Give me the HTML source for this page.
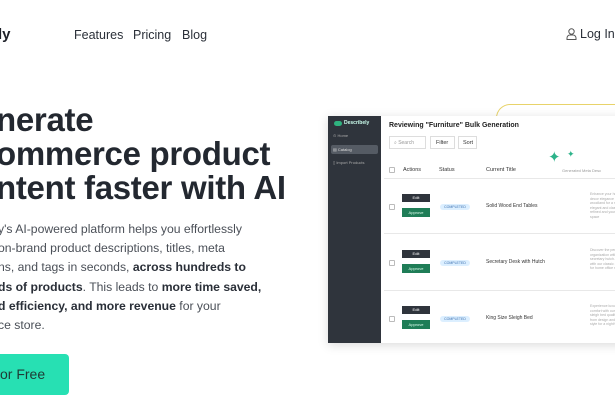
<!DOCTYPE html>
<html><head><style>
*{margin:0;padding:0;box-sizing:border-box}
body{width:615px;height:410px;overflow:hidden;background:#fff;font-family:"Liberation Sans",sans-serif;color:#222;position:relative}
.a{position:absolute;white-space:nowrap}
.nav{font-size:12.5px;color:#2a2f38}
h1{position:absolute;left:-4px;top:103px;font-size:33px;line-height:34px;font-weight:bold;color:#232830;letter-spacing:-0.3px}
.p{position:absolute;left:-2px;top:220px;font-size:12.2px;line-height:19.2px;color:#4a4f57}
.p b{color:#2a2f38}
.btn{position:absolute;left:-10px;top:354px;width:79px;height:41px;background:#27e0b3;border-radius:4px;font-size:14px;color:#1f3a34;padding:12px 0 0 10px}
.shot{position:absolute;left:328px;top:116px;width:300px;height:227px;background:#fff;box-shadow:0 2px 10px rgba(0,0,0,.15)}
.side{position:absolute;left:0;top:0;width:53px;height:227px;background:#2f343c}
.t{font-size:5.5px;color:#333}
.edit{position:absolute;left:74px;width:28px;height:8px;background:#2f343c;color:#fff;font-size:4px;text-align:center;line-height:8px}
.appr{position:absolute;left:74px;width:28px;height:9px;background:#1f7d57;color:#dfe;font-size:4px;text-align:center;line-height:9px}
.badge{position:absolute;left:112px;width:30px;height:6px;background:#dcefff;color:#3a6fb0;font-size:3.5px;text-align:center;line-height:6px;border-radius:3px}
.cb{position:absolute;left:61px;width:6px;height:6px;border:1px solid #bbb;border-radius:1px}
.line{position:absolute;left:56px;right:0;height:1px;background:#e8e8e8}
.desc{position:absolute;left:262px;width:40px;font-size:3.5px;line-height:4.5px;color:#aaa;white-space:normal}
</style></head><body>
<div class="a" style="left:-2px;top:26px;font-size:15px;font-weight:bold;color:#1d2028">ly</div>
<div class="a nav" style="left:74px;top:28px">Features</div>
<div class="a nav" style="left:133px;top:28px">Pricing</div>
<div class="a nav" style="left:182px;top:28px">Blog</div>
<svg class="a" style="left:566px;top:28px" width="11" height="12" viewBox="0 0 11 12"><circle cx="5.5" cy="3.5" r="2.7" fill="none" stroke="#555" stroke-width="1"/><path d="M1 11.5V10a3 3 0 0 1 3-3h3a3 3 0 0 1 3 3v1.5z" fill="none" stroke="#555" stroke-width="1"/></svg>
<div class="a nav" style="left:580px;top:27px;font-size:12.5px">Log In</div>
<h1>nerate<br>ommerce product<br>ntent faster with AI</h1>
<div class="p">y's AI-powered platform helps you effortlessly<br>on-brand product descriptions, titles, meta<br>ns, and tags in seconds, <b>across hundreds to</b><br><b>ds of products</b>. This leads to <b>more time saved,</b><br><b>d efficiency, and more revenue</b> for your<br>ce store.</div>
<div class="btn">or Free</div>
<div class="a" style="left:496px;top:104px;width:140px;height:40px;border:1.5px solid #e8d36a;border-right:none;border-bottom:none;border-radius:14px 0 0 0"></div>
<div class="shot">
 <div class="side">
  <div class="a" style="left:6px;top:5px;width:8px;height:5px;background:#2fb37f;border-radius:3px"></div>
  <div class="a" style="left:16px;top:4px;font-size:5px;color:#cfe;font-weight:bold">Describely</div>
  <div class="a" style="left:5px;top:17px;font-size:4px;color:#aaa">⊙ Home</div>
  <div class="a" style="left:3px;top:29px;width:47px;height:9px;background:#555b64;border-radius:2px"></div>
  <div class="a" style="left:5px;top:31px;font-size:4px;color:#ddd">▤ Catalog</div>
  <div class="a" style="left:5px;top:44px;font-size:4px;color:#aaa">▯ Import Products</div>
 </div>
 <div class="a" style="left:61px;top:6px;font-size:7px;font-weight:bold;color:#222">Reviewing "Furniture" Bulk Generation</div>
 <div class="a" style="left:61px;top:20px;width:37px;height:13px;border:1px solid #ddd;font-size:5px;color:#999;padding:3px 4px">⌕ Search</div>
 <div class="a" style="left:102px;top:20px;width:25px;height:13px;border:1px solid #ddd;font-size:5.5px;color:#333;padding:3px 5px">Filter</div>
 <div class="a" style="left:130px;top:20px;width:19px;height:13px;border:1px solid #ddd;font-size:5.5px;color:#333;padding:3px 4px">Sort</div>
 <div class="cb" style="top:51px"></div>
 <div class="a t" style="left:75px;top:51px">Actions</div>
 <div class="a t" style="left:111px;top:51px">Status</div>
 <div class="a t" style="left:158px;top:51px">Current Title</div>
 <div class="a" style="left:220px;top:32px;font-size:15px;color:#2db38a">✦</div>
 <div class="a" style="left:239px;top:33px;font-size:9px;color:#2db38a">✦</div>
 <div class="a" style="left:234px;top:52px;font-size:4px;color:#999">Generated Meta Desc</div>
 <div class="line" style="top:62px"></div>
 <div class="line" style="top:117px"></div>
 <div class="line" style="top:174px"></div>
 <div class="edit" style="top:78px">Edit</div><div class="appr" style="top:92px">Approve</div>
 <div class="badge" style="top:88px">COMPLETED</div><div class="cb" style="top:88px"></div>
 <div class="a t" style="left:158px;top:87px;font-size:5px">Solid Wood End Tables</div>
 <div class="desc" style="top:76px">Enhance your home decor elegance and woodland for a more elegant and classic wide refined and your living space</div>
 <div class="edit" style="top:134px">Edit</div><div class="appr" style="top:148px">Approve</div>
 <div class="badge" style="top:144px">COMPLETED</div><div class="cb" style="top:144px"></div>
 <div class="a t" style="left:158px;top:143px;font-size:5px">Secretary Desk with Hutch</div>
 <div class="desc" style="top:132px">Discover the perfect organization with our secretary hutch. Stay with our classic design for home office needs</div>
 <div class="edit" style="top:190px">Edit</div><div class="appr" style="top:204px">Approve</div>
 <div class="badge" style="top:200px">COMPLETED</div><div class="cb" style="top:200px"></div>
 <div class="a t" style="left:158px;top:199px;font-size:5px">King Size Sleigh Bed</div>
 <div class="desc" style="top:188px">Experience luxurious comfort with our king sleigh bed quality crafted from design and timeless style for a night's sleep</div>
</div>
</body></html>
